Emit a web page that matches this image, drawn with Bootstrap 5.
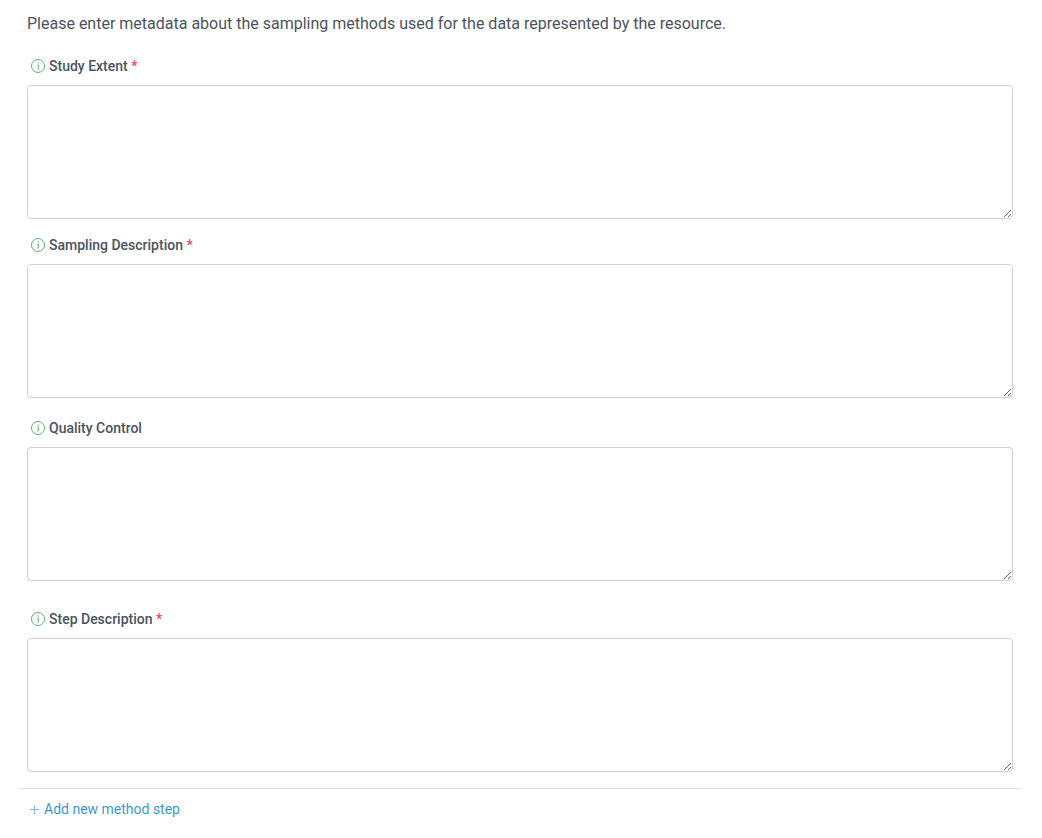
<!DOCTYPE html>
<html lang="en">
<head>
  <meta charset="UTF-8" />
  <meta name="viewport" content="width=device-width, initial-scale=1.0"/>
  <title>Sampling methods</title>
  <link href="https://cdn.jsdelivr.net/npm/bootstrap@5.3.3/dist/css/bootstrap.min.css" rel="stylesheet"/>
  <script src="https://cdn.jsdelivr.net/npm/bootstrap@5.3.3/dist/js/bootstrap.bundle.min.js"></script>
  <style>
    body { font-family: Roboto, "Liberation Sans", sans-serif; color: #4a5460; background: #fff; overflow: hidden; }
    .form-wrap { padding: 0 21px 0 19px; }
    .form-inner { padding: 0 8px; }
    .intro-text { font-size: 16px; line-height: 22px; padding-top: 13px; margin: 0 0 21px; }
    .field-label { font-size: 14px; line-height: 20px; font-weight: 500; margin: 0 0 9px; padding-left: 4px; gap: 4px; color: #4a5460; }
    .info-icon { width: 14px; height: 14px; flex: none; }
    .req-mark { color: #e8495f; }
    .form-control.meta-area { height: 134px; border-color: #cfd0d8; border-radius: 4px; }
    .field-gap { margin-bottom: 16px; }
    .field-gap-b { margin-bottom: 20px; }
    .field-gap-c { margin-bottom: 28px; }
    .step-rule { margin: 16px 0 0; border-top: 1px solid #e0e0e8; opacity: 1; }
    .add-step { font-size: 14px; line-height: 20px; color: #3d9bcb; text-decoration: none; padding: 10px 0 0 11px; gap: 5px; }
    .add-step svg { width: 9px; height: 9px; }
  </style>
</head>
<body>
  <div class="form-wrap">
    <div class="form-inner">
      <p class="intro-text">Please enter metadata about the sampling methods used for the data represented by the resource.</p>

      <div class="field-gap">
        <label class="field-label d-flex align-items-center" for="extent">
          <svg class="info-icon" viewBox="0 0 14 14" fill="none" stroke="#5cb270"><circle cx="7" cy="7" r="6.5"/><path d="M7.4 3.4v1.1M6.4 6h1l-.3 4.6"/></svg>
          <span>Study Extent <span class="req-mark">*</span></span>
        </label>
        <textarea class="form-control meta-area" id="extent"></textarea>
      </div>

      <div class="field-gap-b">
        <label class="field-label d-flex align-items-center" for="sampling">
          <svg class="info-icon" viewBox="0 0 14 14" fill="none" stroke="#5cb270"><circle cx="7" cy="7" r="6.5"/><path d="M7.4 3.4v1.1M6.4 6h1l-.3 4.6"/></svg>
          <span>Sampling Description <span class="req-mark">*</span></span>
        </label>
        <textarea class="form-control meta-area" id="sampling"></textarea>
      </div>

      <div class="field-gap-c">
        <label class="field-label d-flex align-items-center" for="quality">
          <svg class="info-icon" viewBox="0 0 14 14" fill="none" stroke="#5cb270"><circle cx="7" cy="7" r="6.5"/><path d="M7.4 3.4v1.1M6.4 6h1l-.3 4.6"/></svg>
          <span>Quality Control</span>
        </label>
        <textarea class="form-control meta-area" id="quality"></textarea>
      </div>

      <div>
        <label class="field-label d-flex align-items-center" for="step">
          <svg class="info-icon" viewBox="0 0 14 14" fill="none" stroke="#5cb270"><circle cx="7" cy="7" r="6.5"/><path d="M7.4 3.4v1.1M6.4 6h1l-.3 4.6"/></svg>
          <span>Step Description <span class="req-mark">*</span></span>
        </label>
        <textarea class="form-control meta-area" id="step"></textarea>
      </div>
    </div>
    <hr class="step-rule">
    <a class="add-step d-flex align-items-center" href="#">
      <svg viewBox="0 0 9 9" stroke="#7fbcdc" fill="none"><path d="M4.5 0v9M0 4.5h9"/></svg>
      <span>Add new method step</span>
    </a>
  </div>
</body>
</html>
